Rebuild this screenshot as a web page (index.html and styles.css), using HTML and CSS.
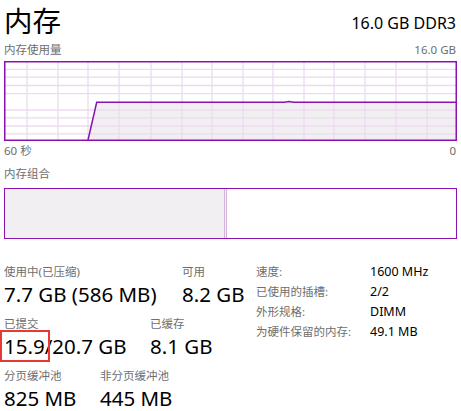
FILE: index.html
```html
<!DOCTYPE html>
<html lang="zh-CN">
<head>
<meta charset="utf-8">
<link rel="stylesheet" href="styles.css">
</head>
<body>
<div class="page">
  <header class="head">
    <h1 class="title">内存</h1>
    <div class="spec">16.0 GB DDR3</div>
  </header>
  <div class="cap-row"><span>内存使用量</span><span>16.0 GB</span></div>
  <svg class="chart" width="453" height="80" viewBox="0 0 453 80">
    <polygon points="84,79 92.7,41.3 453,41.3 453,79" fill="#f2eff2"/>
    <g stroke="#ecdaf1" stroke-width="1.3">
      <line x1="23" y1="0" x2="23" y2="80"/><line x1="54" y1="0" x2="54" y2="80"/>
      <line x1="84" y1="0" x2="84" y2="80"/><line x1="115" y1="0" x2="115" y2="80"/>
      <line x1="147" y1="0" x2="147" y2="80"/><line x1="178" y1="0" x2="178" y2="80"/>
      <line x1="208" y1="0" x2="208" y2="80"/><line x1="239" y1="0" x2="239" y2="80"/>
      <line x1="269" y1="0" x2="269" y2="80"/><line x1="300" y1="0" x2="300" y2="80"/>
      <line x1="330" y1="0" x2="330" y2="80"/><line x1="361" y1="0" x2="361" y2="80"/>
      <line x1="392" y1="0" x2="392" y2="80"/><line x1="423" y1="0" x2="423" y2="80"/>
      <line x1="0" y1="8.3" x2="453" y2="8.3"/><line x1="0" y1="16.2" x2="453" y2="16.2"/>
      <line x1="0" y1="24.5" x2="453" y2="24.5"/><line x1="0" y1="32.7" x2="453" y2="32.7"/>
      <line x1="0" y1="49" x2="453" y2="49"/><line x1="0" y1="56.8" x2="453" y2="56.8"/>
      <line x1="0" y1="65" x2="453" y2="65"/><line x1="0" y1="72.8" x2="453" y2="72.8"/>
    </g>
    <polyline points="84,79 92.7,41.3 280,41.3 285,40.6 290,41.3 453,41.3" fill="none" stroke="#8b12ae" stroke-width="1.5"/>
    <rect x="0.75" y="0.75" width="451.5" height="78.5" fill="none" stroke="#8b12ae" stroke-width="1.5"/>
  </svg>
  <div class="cap-row axis"><span>60 秒</span><span>0</span></div>
  <div class="cap-row comp-cap"><span>内存组合</span></div>
  <div class="comp">
    <div class="comp-used"></div>
    <div class="comp-sep"></div>
    <div class="comp-free"></div>
  </div>
  <section class="stats">
    <div class="left">
      <div class="row r1">
        <div class="item w1"><div class="lbl">使用中(已压缩)</div><div class="val">7.7 GB (586 MB)</div></div>
        <div class="item"><div class="lbl">可用</div><div class="val">8.2 GB</div></div>
      </div>
      <div class="row r2">
        <div class="item w2"><div class="lbl">已提交</div><div class="val"><span class="mark">15.9</span>/20.7 GB</div></div>
        <div class="item"><div class="lbl">已缓存</div><div class="val">8.1 GB</div></div>
      </div>
      <div class="row r3">
        <div class="item w3"><div class="lbl">分页缓冲池</div><div class="val">825 MB</div></div>
        <div class="item"><div class="lbl">非分页缓冲池</div><div class="val">445 MB</div></div>
      </div>
    </div>
    <dl class="info">
      <dt>速度:</dt><dd>1600 MHz</dd>
      <dt>已使用的插槽:</dt><dd>2/2</dd>
      <dt>外形规格:</dt><dd>DIMM</dd>
      <dt>为硬件保留的内存:</dt><dd>49.1 MB</dd>
    </dl>
  </section>
</div>
</body>
</html>
```

FILE: styles.css
```css
* { box-sizing: border-box; }
html, body { margin: 0; padding: 0; background: #fff; }
body {
  font-family: "Noto Sans", "Noto Sans CJK SC", sans-serif;
  color: #000;
  width: 461px;
  height: 411px;
  overflow: hidden;
}
.page { padding: 0 4px; }
.head {
  display: flex;
  justify-content: space-between;
  align-items: flex-start;
  height: 40px;
}
.title {
  margin: 1px 0 0;
  font-family: "Noto Sans CJK SC", sans-serif;
  font-weight: 400;
  font-size: 28.5px;
  line-height: 38px;
}
.spec {
  font-size: 16px;
  line-height: 20px;
  margin-top: 13px;
  margin-right: 1px;
}
.cap-row {
  display: flex;
  justify-content: space-between;
  font-size: 11.5px;
  line-height: 16px;
  color: #6e6e6e;
  height: 20px;
  padding-top: 2px;
}
.cap-row span:last-child { margin-right: 1px; }
.chart { display: block; margin-top: 1px; }
.axis { height: 20px; padding-top: 2px; }
.comp-cap { height: 27px; padding-top: 5px; }
.comp {
  display: flex;
  height: 51px;
  border: 1.5px solid #8b12ae;
  width: 453px;
}
.comp-used { width: 219px; background: #f2eff2; }
.comp-sep {
  width: 3px;
  border-left: 1px solid #d2b4dc;
  border-right: 1px solid #d2b4dc;
  background: #f2eff2;
}
.comp-free { flex: 1; background: #fff; }
.stats {
  display: flex;
  padding-top: 25px;
}
.left { width: 252px; }
.row { display: flex; }
.item { display: flex; flex-direction: column; }
.w1 { width: 178px; }
.w2 { width: 146px; }
.w3 { width: 96px; }
.lbl {
  font-size: 11.5px;
  line-height: 16px;
  color: #6e6e6e;
}
.val {
  font-size: 20.5px;
  line-height: 26px;
  padding-top: 1px;
  white-space: nowrap;
}
.r2 { margin-top: 9px; }
.r3 { margin-top: 9px; }
.mark {
  outline: 2px solid #e53935;
  outline-offset: 0;
  padding: 0 3px 0 2px;
  margin: 0 -3px 0 -2px;
}
.info {
  margin: 0;
  display: grid;
  grid-template-columns: 114px auto;
  grid-auto-rows: 20px;
  font-size: 11.5px;
  line-height: 16px;
}
.info dt { color: #6e6e6e; }
.info dd { margin: 0; color: #000; font-size: 12.5px; }
```
